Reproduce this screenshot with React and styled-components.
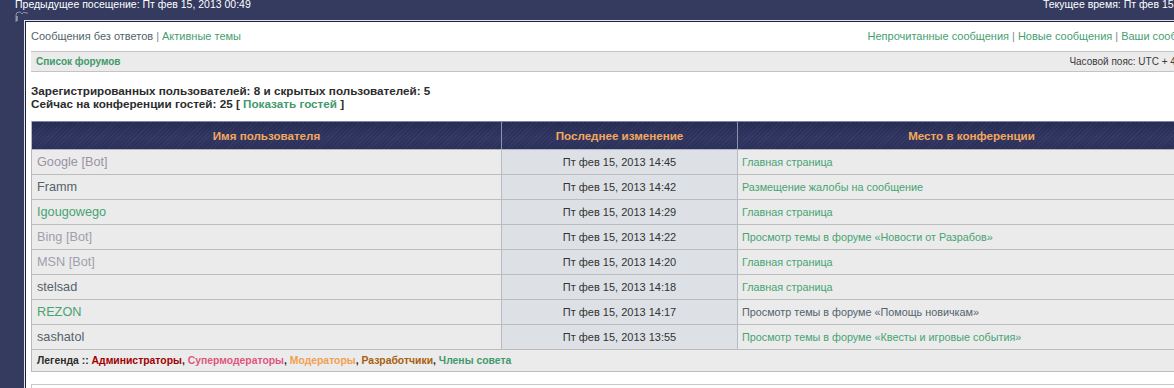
import React from "react";
import styled, { createGlobalStyle } from "styled-components";

const Global = createGlobalStyle`
  html, body { margin: 0; padding: 0; overflow: hidden; background: #343b5f; }
  body { font-family: "Liberation Sans", Arial, sans-serif; font-size: 11px; }
`;

const Page = styled.div`
  width: 1232px;
  background: #343b5f;
  height: 388px;
`;

const TopBar = styled.div`
  display: flex;
  justify-content: space-between;
  width: 1232px;
  height: 20px;
  padding: 0 0 0 15px;
  color: #ffffff;
  font-size: 10.5px;
  line-height: 9px;
  box-sizing: border-box;
  position: relative;
`;

const Ornament = styled.svg`
  position: absolute;
  left: 14px;
  top: 9px;
`;

const Panel = styled.div`
  margin-left: 24px;
  border-top: 1px solid #e4e6ee;
  border-left: 1px solid #e4e6ee;
  box-shadow: inset 1px 1px 0 #1e2238;
  background: #ffffff;
  padding: 2px 6px 0 6px;
  height: 380px;
  box-sizing: border-box;
`;

const NavRow = styled.div`
  display: flex;
  justify-content: space-between;
  height: 26px;
  align-items: center;
  padding-right: 16px;
  color: #8a9a9a;
`;

const NavLinks = styled.div`
  font-size: 11px;
`;

const NavLink = styled.a`
  color: ${(p) => (p.$dark ? "#51646a" : "#45a070")};
  text-decoration: none;
`;

const Sep = styled.span`
  color: #7a8a8a;
  margin: 0 3px;
`;

const Crumbs = styled.div`
  display: flex;
  justify-content: space-between;
  align-items: center;
  margin-top: 2px;
  height: 19px;
  background: #ebebeb;
  border-top: 1px solid #c4c4c4;
  border-bottom: 1px solid #c4c4c4;
  padding: 0 26px 0 5px;
`;

const CrumbLink = styled.a`
  color: #3f9a6c;
  font-weight: bold;
  font-size: 10px;
  text-decoration: none;
`;

const Timezone = styled.span`
  color: #3a3a3a;
  font-size: 10px;
`;

const Stats = styled.div`
  margin-top: 12px;
  color: #2c2c2c;
  font-weight: bold;
  font-size: 11.7px;
  line-height: 13px;
`;

const StatLink = styled.a`
  color: #3f9a6c;
  text-decoration: none;
`;

const Table = styled.div`
  margin-top: 11px;
  width: 1173px;
  border-left: 1px solid #b9b9b9;
`;

const Head = styled.div`
  display: grid;
  grid-template-columns: 469px 236px 1fr;
  height: 27px;
  border-top: 1px solid #7d84a6;
  border-bottom: 1px solid #aeb3c8;
  background:
    repeating-linear-gradient(135deg, rgba(255,255,255,0.04) 0 1px, rgba(0,0,0,0) 1px 3px),
    linear-gradient(#262b52, #2f3560 60%, #2a2f58);
`;

const HeadCell = styled.div`
  display: flex;
  align-items: center;
  justify-content: center;
  color: #f4a85c;
  font-weight: bold;
  font-size: 11.6px;
  border-left: ${(p) => (p.$first ? "none" : "1px solid #8c92b0")};
`;

const Row = styled.div`
  display: grid;
  grid-template-columns: 469px 236px 1fr;
  height: 24px;
  border-bottom: 1px solid #bcbcbc;
  background: #ebebeb;
`;

const Cell = styled.div`
  display: flex;
  align-items: center;
  font-size: ${(p) => p.$size || "11px"};
  padding-left: ${(p) => (p.$pad ? p.$pad : "5px")};
  justify-content: ${(p) => (p.$center ? "center" : "flex-start")};
  background: ${(p) => (p.$alt ? "#dde1e5" : "transparent")};
  border-left: ${(p) => (p.$first ? "none" : "1px solid #b4bac6")};
  color: ${(p) => p.$color || "#333"};
`;

const Legend = styled.div`
  height: 21px;
  display: flex;
  align-items: center;
  padding-left: 5px;
  background: #ebebeb;
  border-bottom: 1px solid #bcbcbc;
  font-weight: bold;
  font-size: 10.4px;
  color: #2c2c2c;
`;

const Group = styled.span`
  color: ${(p) => p.$color};
`;

const NextBox = styled.div`
  margin-top: 12px;
  width: 1173px;
  border-top: 1px solid #c8c8c8;
  border-left: 1px solid #c8c8c8;
  height: 10px;
`;

const C = {
  bot: "#9b92a6",
  dark: "#53636c",
  green: "#46a472",
  gray: "#a0a0ac",
};

const rows = [
  ["Google [Bot]", C.bot, "Пт фев 15, 2013 14:45", "Главная страница", C.green],
  ["Framm", C.dark, "Пт фев 15, 2013 14:42", "Размещение жалобы на сообщение", C.green],
  ["Igougowego", C.green, "Пт фев 15, 2013 14:29", "Главная страница", C.green],
  ["Bing [Bot]", C.gray, "Пт фев 15, 2013 14:22", "Просмотр темы в форуме «Новости от Разрабов»", C.green],
  ["MSN [Bot]", C.gray, "Пт фев 15, 2013 14:20", "Главная страница", C.green],
  ["stelsad", C.dark, "Пт фев 15, 2013 14:18", "Главная страница", C.green],
  ["REZON", C.green, "Пт фев 15, 2013 14:17", "Просмотр темы в форуме «Помощь новичкам»", C.dark],
  ["sashatol", C.dark, "Пт фев 15, 2013 13:55", "Просмотр темы в форуме «Квесты и игровые события»", C.green],
];

export default function App() {
  return (
    <>
      <Global />
      <Page>
        <TopBar>
          <span>Предыдущее посещение: Пт фев 15, 2013 00:49</span>
          <span>Текущее время: Пт фев 15, 2013 14:47</span>
          <Ornament width="14" height="14" viewBox="0 0 14 14">
            <path d="M2 13 L2 6 Q2 3 5 3 Q7 3 8 5 Q9 2 12 4 L14 4" stroke="#8e93aa" strokeWidth="1" fill="none" />
            <path d="M3 12 L3 7" stroke="#c9ccd8" strokeWidth="1" fill="none" />
          </Ornament>
        </TopBar>
        <Panel>
          <NavRow>
            <NavLinks>
              <NavLink $dark href="#">Сообщения без ответов</NavLink>
              <Sep>|</Sep>
              <NavLink href="#">Активные темы</NavLink>
            </NavLinks>
            <NavLinks>
              <NavLink href="#">Непрочитанные сообщения</NavLink>
              <Sep>|</Sep>
              <NavLink href="#">Новые сообщения</NavLink>
              <Sep>|</Sep>
              <NavLink href="#">Ваши сообщения</NavLink>
            </NavLinks>
          </NavRow>
          <Crumbs>
            <CrumbLink href="#">Список форумов</CrumbLink>
            <Timezone>Часовой пояс: UTC + 4 часа</Timezone>
          </Crumbs>
          <Stats>
            <div>Зарегистрированных пользователей: 8 и скрытых пользователей: 5</div>
            <div>
              Сейчас на конференции гостей: 25 [ <StatLink href="#">Показать гостей</StatLink> ]
            </div>
          </Stats>
          <Table>
            <Head>
              <HeadCell $first>Имя пользователя</HeadCell>
              <HeadCell>Последнее изменение</HeadCell>
              <HeadCell>Место в конференции</HeadCell>
            </Head>
            {rows.map((r) => (
              <Row key={r[0]}>
                <Cell $first $pad="5px" $size="12.7px" $color={r[1]}>{r[0]}</Cell>
                <Cell $alt $center $pad="0" $color="#333">{r[2]}</Cell>
                <Cell $pad="4px" $size="10.8px" $color={r[4]}>{r[3]}</Cell>
              </Row>
            ))}
            <Legend>
              Легенда ::&nbsp;<Group $color="#a00000">Администраторы</Group>,&nbsp;
              <Group $color="#e0557e">Супермодераторы</Group>,&nbsp;
              <Group $color="#f0a050">Модераторы</Group>,&nbsp;
              <Group $color="#a8600c">Разработчики</Group>,&nbsp;
              <Group $color="#3f9a6c">Члены совета</Group>
            </Legend>
          </Table>
          <NextBox />
        </Panel>
      </Page>
    </>
  );
}
